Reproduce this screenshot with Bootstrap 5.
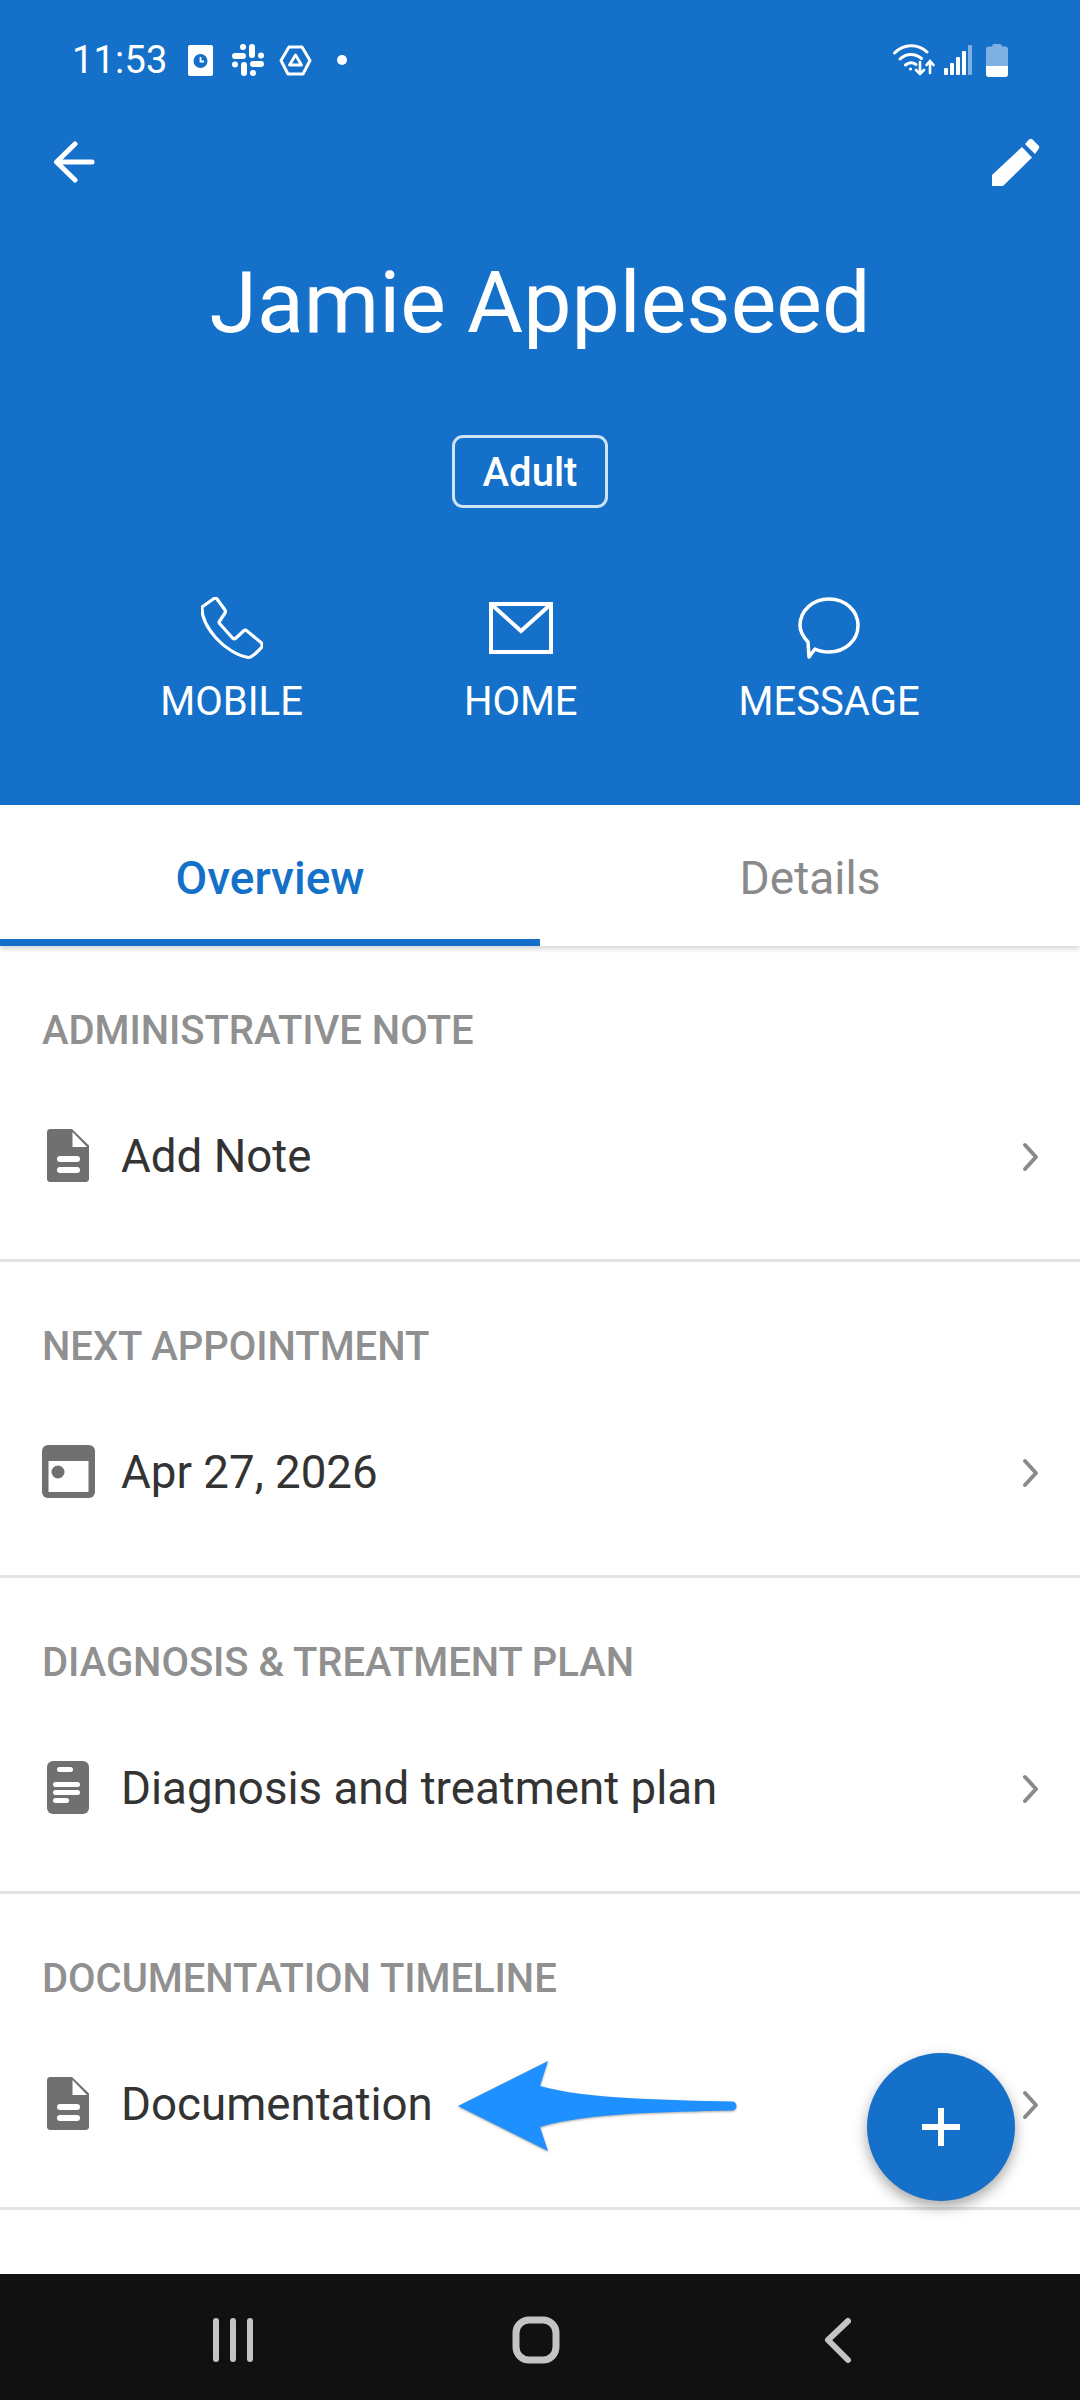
<!DOCTYPE html>
<html lang="en"><head><meta charset="utf-8"><title>Jamie Appleseed</title>
<link href="https://cdn.jsdelivr.net/npm/bootstrap@5.3.0/dist/css/bootstrap.min.css" rel="stylesheet">
<style>
html,body{margin:0;padding:0}
body{width:1080px;height:2400px;overflow:hidden;font-family:Roboto,"Liberation Sans",sans-serif;background:#fff;color:#333}
.app-shell{width:1080px;height:2400px;position:relative}
.hero{background:#1470c8;height:805px;color:#fff}
svg{display:block;flex:none}
.status-row{height:120px;padding:0 72px 0 72px}
.clock{font-size:38px;line-height:1;letter-spacing:.2px;margin-right:20px}
.ic-gap-a{margin-right:19px}
.ic-gap-b{margin-right:15px}
.tool-row{height:84px;padding:0 40px 0 53px}
.hero-name{font-size:86px;font-weight:400;line-height:1;margin:0;padding-top:56px;text-align:center;height:204px}
.tag-row{margin-top:27px;padding-right:20px}
.tag-box{border:3px solid #cfe2f6;border-radius:11px;width:156px;height:73px;font-size:40px;font-weight:500;line-height:1;padding-top:3px}
.action-row{gap:161px;margin-top:89px}
.action-item{font-size:40px;line-height:1;color:#fff}
.action-item svg{margin:0 auto 23px;height:62px}
.tab-strip{height:141px;box-shadow:0 3px 5px rgba(0,0,0,.16);position:relative;z-index:1;background:#fff}
.tab-strip .nav-link{height:141px;padding:0;font-size:46px;color:#8a8a8a;border-bottom:7px solid transparent;line-height:146px}
.tab-strip .nav-link.active{color:#1470c8;font-weight:500;border-bottom-color:#1470c8}
.sec{height:316px;padding:0 40px 0 42px;border-bottom:3px solid #e4e4e4 !important;border-left:0;border-right:0;border-top:0;border-radius:0 !important;background:#fff;color:inherit}
.sec-label{font-size:40px;font-weight:500;line-height:1;color:#909090;padding-top:65px;height:182px;margin:0;letter-spacing:-.05px}
.sec-line{font-size:45.7px;line-height:1;height:58px}
.sec-ico{width:53px;margin-right:26px;margin-top:-3px}
.fab{position:absolute;left:867px;top:2053px;width:148px;height:148px;border-radius:50%;background:#1470c8;box-shadow:0 6px 14px rgba(0,0,0,.35);z-index:3}
.pointer{position:absolute;left:455px;top:2058px;z-index:2;filter:drop-shadow(0 1px 1px rgba(0,0,0,.35))}
.sys-bar{position:absolute;left:0;right:0;bottom:0;height:126px;background:#111}
</style></head><body>
<div class="app-shell">
<header class="hero">
 <div class="status-row d-flex align-items-center">
  <span class="clock">11:53</span>
  <svg width="25" height="31" viewBox="0 0 25 31" class="ic-gap-a"><rect width="25" height="31" rx="2" fill="#fff"/><circle cx="12.5" cy="16" r="7" fill="#1470c8"/><path d="M12.5 12v4.500h3.500" stroke="#fff" stroke-width="1.800" fill="none"/></svg>
  <svg width="32" height="32" viewBox="0 0 32 32" class="ic-gap-b" fill="#fff"><rect x="0" y="9" width="14" height="6" rx="3"/><rect x="17" y="0" width="6" height="14" rx="3"/><rect x="18" y="17" width="14" height="6" rx="3"/><rect x="9" y="18" width="6" height="14" rx="3"/><circle cx="11" cy="3" r="3"/><circle cx="29" cy="11.500" r="3"/><circle cx="21" cy="29" r="3"/><circle cx="3" cy="20.500" r="3"/></svg>
  <svg width="33" height="31" viewBox="0 0 33 31"><path d="M10 2h13l8 13.500-7 13.500h-15L2 15.500z" stroke="#fff" stroke-width="3" fill="none" stroke-linejoin="round"/><path d="M16.500 10l6 10h-12z" stroke="#fff" stroke-width="2.800" fill="none" stroke-linejoin="round"/></svg>
  <svg width="10" height="10" viewBox="0 0 10 10" style="margin-left:25px"><circle cx="5" cy="5" r="5" fill="#fff"/></svg>
  <div class="ms-auto d-flex align-items-center">
   <svg width="42" height="32" viewBox="0 0 42 32" fill="none" stroke="#fff" stroke-width="3" stroke-linecap="round"><path d="M1.500 9C11 -.5 25 -.5 34 8"/><path d="M7 15c6.500-6 15-6 21.500-.5"/><path d="M12.500 21c3.500-3 7-3 10.500-.5"/><circle cx="17.500" cy="25" r="1.500" fill="#fff" stroke="none"/><path d="M27 18v12M23 26l4 4 4-4" stroke-width="2.600"/><path d="M37 29V17M33.500 21l3.500-4 3.500 4" stroke-width="2.600"/></svg>
   <svg width="28" height="30" viewBox="0 0 28 30" style="margin-left:9px" fill="#fff"><rect x="0" y="23" width="4" height="7" rx="1"/><rect x="6" y="18" width="4" height="12" rx="1"/><rect x="12" y="12" width="4" height="18" rx="1"/><rect x="18" y="6" width="4" height="24" rx="1"/><rect x="24" y="0" width="4" height="30" rx="1" fill="#7fb0e3"/></svg>
   <svg width="22" height="33" viewBox="0 0 22 33" style="margin-left:14px"><path d="M6 2.500c0-1.500 1-2.500 2-2.500h6c1 0 2 1 2 2.500H19c2 0 3 1 3 3V30c0 2-1 3-3 3H3c-2 0-3-1-3-3V5.500c0-2 1-3 3-3z" fill="#7fb0e3"/><path d="M0 22h22v8c0 2-1 3-3 3H3c-2 0-3-1-3-3z" fill="#fff"/></svg>
  </div>
 </div>
 <div class="tool-row d-flex align-items-center justify-content-between">
  <svg width="42" height="42" viewBox="0 0 42 42" fill="none" stroke="#fff" stroke-width="5" stroke-linecap="round" stroke-linejoin="round"><path d="M39 21H4M22 3 3.500 21 22 39"/></svg>
  <svg width="48" height="48" viewBox="0 0 48 48" fill="#fff"><path d="M0 48V37L30 9l10 10.500L11 48z"/><path d="M33 6 37 1.500c1-1 2.500-1 3.500 0l6 6c1 1 1 2.500 0 3.500L43 16z"/></svg>
 </div>
 <h1 class="hero-name">Jamie Appleseed</h1>
 <div class="tag-row d-flex justify-content-center"><div class="tag-box d-flex align-items-center justify-content-center">Adult</div></div>
 <div class="action-row d-flex justify-content-center">
  <div class="action-item text-center"><svg width="62" height="62" viewBox="0 0 62 62" fill="none" stroke="#fff" stroke-width="3.200" stroke-linejoin="round"><path d="M13 1.500 1 10c-.5 10 6 22 14 31s22 18.500 33 19.500c3 0 12-9 13-11 .5-1.500 0-3-1-4L46 34c-1-1-2.500-1-3.500 0L35 41c-1 1-2.500 1-3.500 0L19 27c-1-1-1-2.500 0-3.500L24 16c.5-1 .5-2 0-3L16 2c-.8-1-2-1.300-3-.5Z"/></svg>MOBILE</div>
  <div class="action-item text-center"><svg width="64" height="62" viewBox="0 0 64 62" fill="none" stroke="#fff" stroke-width="4"><rect x="2" y="7" width="60" height="48"/><path d="M2.500 7.500 32 34 61.500 7.500"/></svg>HOME</div>
  <div class="action-item text-center"><svg width="64" height="62" viewBox="0 0 64 62" fill="none" stroke="#fff" stroke-width="3.500" stroke-linejoin="round"><path d="M32 2c16 0 29 11.500 29 26.500S48 55 32 55c-5 0-10-1-14-3L12 60l-1-15C6 39.500 3 34.500 3 28.500 3 13.500 16 2 32 2Z"/></svg>MESSAGE</div>
 </div>
</header>
<nav class="tab-strip nav nav-justified">
 <a class="nav-link active" href="#">Overview</a>
 <a class="nav-link" href="#">Details</a>
</nav>
<main class="list-group list-group-flush">
 <section class="sec list-group-item">
  <h2 class="sec-label">ADMINISTRATIVE NOTE</h2>
  <div class="sec-line d-flex align-items-center">
   <span class="sec-ico"><svg width="53" height="53" viewBox="0 0 53 53" fill="#707070"><path d="M8 0h22l17 16.500V50c0 1.600-1.400 3-3 3H8c-1.600 0-3-1.400-3-3V3c0-1.600 1.400-3 3-3Zm22.500 3v15H45Z" fill-rule="evenodd"/><rect x="15" y="27" width="23" height="6" rx="3" fill="#fff"/><rect x="15" y="38" width="23" height="6" rx="3" fill="#fff"/></svg></span>
   Add Note
   <svg class="ms-auto" width="18" height="30" viewBox="0 0 18 30" fill="none" stroke="#8a8a8a" stroke-width="4" stroke-linecap="round" stroke-linejoin="round"><path d="M3 3l11 12L3 27"/></svg>
  </div>
 </section>
 <section class="sec list-group-item">
  <h2 class="sec-label">NEXT APPOINTMENT</h2>
  <div class="sec-line d-flex align-items-center">
   <span class="sec-ico"><svg width="53" height="53" viewBox="0 0 53 53" fill="#707070"><rect width="53" height="53" rx="6"/><rect x="6.500" y="16" width="40" height="31" fill="#fff"/><circle cx="16" cy="27" r="6.500"/></svg></span>
   Apr 27, 2026
   <svg class="ms-auto" width="18" height="30" viewBox="0 0 18 30" fill="none" stroke="#8a8a8a" stroke-width="4" stroke-linecap="round" stroke-linejoin="round"><path d="M3 3l11 12L3 27"/></svg>
  </div>
 </section>
 <section class="sec list-group-item">
  <h2 class="sec-label">DIAGNOSIS &amp; TREATMENT PLAN</h2>
  <div class="sec-line d-flex align-items-center">
   <span class="sec-ico"><svg width="53" height="53" viewBox="0 0 53 53" fill="#707070"><rect x="5" width="42" height="53" rx="6"/><g fill="#fff"><rect x="15" y="6" width="16" height="5" rx="2.500"/><rect x="11" y="21" width="27" height="5" rx="2.500" /><rect x="11" y="29" width="27" height="5" rx="2.500"/><rect x="11" y="37" width="16" height="5" rx="2.500"/></g></svg></span>
   Diagnosis and treatment plan
   <svg class="ms-auto" width="18" height="30" viewBox="0 0 18 30" fill="none" stroke="#8a8a8a" stroke-width="4" stroke-linecap="round" stroke-linejoin="round"><path d="M3 3l11 12L3 27"/></svg>
  </div>
 </section>
 <section class="sec list-group-item">
  <h2 class="sec-label">DOCUMENTATION TIMELINE</h2>
  <div class="sec-line d-flex align-items-center">
   <span class="sec-ico"><svg width="53" height="53" viewBox="0 0 53 53" fill="#707070"><path d="M8 0h22l17 16.500V50c0 1.600-1.400 3-3 3H8c-1.600 0-3-1.400-3-3V3c0-1.600 1.400-3 3-3Zm22.500 3v15H45Z" fill-rule="evenodd"/><rect x="15" y="27" width="23" height="6" rx="3" fill="#fff"/><rect x="15" y="38" width="23" height="6" rx="3" fill="#fff"/></svg></span>
   Documentation
   <svg class="ms-auto" width="18" height="30" viewBox="0 0 18 30" fill="none" stroke="#8a8a8a" stroke-width="4" stroke-linecap="round" stroke-linejoin="round"><path d="M3 3l11 12L3 27"/></svg>
  </div>
 </section>
</main>
<svg class="pointer" width="290" height="96" viewBox="0 0 290 96"><path d="M3 48 93 3 85 28C130 41 210 42 277 43.500a4.500 4.500 0 0 1 0 9C210 54 130 55 85 69L93 93Z" fill="#1e90ff"/></svg>
<button type="button" class="fab btn d-flex align-items-center justify-content-center p-0" aria-label="Add"><svg width="38" height="38" viewBox="0 0 38 38" fill="#fff"><rect x="16" width="6" height="38"/><rect y="16" width="38" height="6"/></svg></button>
<footer class="sys-bar d-flex">
 <svg width="1080" height="126" viewBox="0 0 1080 126" fill="none" stroke="#c4c4c4" stroke-width="6" stroke-linecap="round" stroke-linejoin="round"><path d="M216 47v38M233 47v38M250 47v38"/><rect x="516" y="46" width="40" height="40" rx="13" stroke-width="7"/><path d="M848 47 828 66l20 20" /></svg>
</footer>
</div>
</body></html>
